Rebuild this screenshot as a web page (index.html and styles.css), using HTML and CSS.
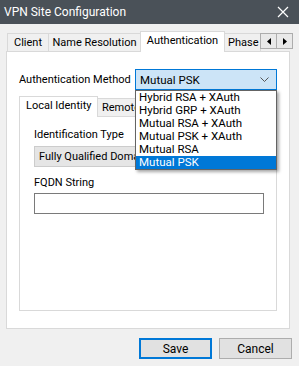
FILE: index.html
```html
<!DOCTYPE html>
<html>
<head>
<meta charset="utf-8">
<link rel="stylesheet" href="styles.css">
</head>
<body>
<div class="window">
  <div class="titlebar">
    <span class="title">VPN Site Configuration</span>
    <svg class="close" width="12" height="12" viewBox="0 0 12 12"><path d="M1 1L11 11M11 1L1 11" stroke="#fff" stroke-width="1.2"/></svg>
  </div>
  <div class="tabs">
    <div class="tab first">Client</div>
    <div class="tab name">Name Resolution</div>
    <div class="tab active">Authentication</div>
    <div class="tab phase">Phase</div>
    <div class="arrows">
      <div class="arrow"><svg width="4" height="7" viewBox="0 0 4 7"><path d="M4 0V7L0 3.5Z" fill="#000"/></svg></div>
      <div class="arrow"><svg width="4" height="7" viewBox="0 0 4 7"><path d="M0 0V7L4 3.5Z" fill="#000"/></svg></div>
    </div>
  </div>
  <div class="panel">
    <div class="method-row">
      <span class="label method-label">Authentication Method</span>
      <div class="combo-wrap">
        <div class="combo">
          <span>Mutual PSK</span>
          <svg width="9" height="6" viewBox="0 0 9 6"><path d="M0.5 0.5L4.5 4.5L8.5 0.5" stroke="#555" fill="none" stroke-width="1"/></svg>
        </div>
        <ul class="dropdown">
          <li>Hybrid RSA + XAuth</li>
          <li>Hybrid GRP + XAuth</li>
          <li>Mutual RSA + XAuth</li>
          <li>Mutual PSK + XAuth</li>
          <li>Mutual RSA</li>
          <li class="sel">Mutual PSK</li>
        </ul>
      </div>
    </div>
    <div class="subtabs">
      <div class="subtab active">Local Identity</div>
      <div class="subtab remote">Remote Identity</div>
    </div>
    <div class="subpanel">
      <div class="label">Identification Type</div>
      <div class="select">Fully Qualified Domain Name</div>
      <div class="label fqdn">FQDN String</div>
      <div class="input"></div>
    </div>
  </div>
  <div class="buttons">
    <button class="btn default">Save</button>
    <button class="btn">Cancel</button>
  </div>
</div>
</body>
</html>
```
FILE: styles.css
```css
* { box-sizing: border-box; }
html, body { margin: 0; padding: 0; }
body {
  width: 299px;
  height: 366px;
  background: #f0f0f0;
  font-family: Roboto, "Liberation Sans", sans-serif;
  font-size: 11px;
  color: #000;
  overflow: hidden;
}
.window { width: 299px; height: 366px; }
.titlebar {
  height: 24px;
  background: #4a5158;
  display: flex;
  align-items: center;
  justify-content: space-between;
  padding: 0 10px 0 4px;
  color: #fff;
  font-size: 12px;
}
.tabs {
  display: flex;
  align-items: flex-end;
  margin-top: 8px;
  padding-left: 7px;
  height: 19px;
  position: relative;
  z-index: 2;
}
.tab {
  height: 18px;
  border: 1px solid #d9d9d9;
  border-bottom: none;
  border-left: none;
  background: #f0f0f0;
  line-height: 17px;
  white-space: nowrap;
  text-align: center;
  overflow: hidden;
}
.tab.first { border-left: 1px solid #d9d9d9; width: 42px; }
.tab.name { width: 92px; }
.tab.active {
  width: 85px;
  background: #fff;
  border-left: 1px solid #d9d9d9;
  margin-left: -1px;
  margin-right: -1px;
  position: relative;
  z-index: 3;
  line-height: 18px;
  height: 21px;
  margin-bottom: -1px;
}
.tab.phase { width: 37px; text-align: left; padding-left: 4px; }
.arrows { display: flex; align-self: flex-start; margin-top: 1px; margin-left: -1px; }
.arrow {
  width: 17px;
  height: 16px;
  border: 1px solid #adadad;
  background: #e9e9e9;
  display: flex;
  align-items: center;
  justify-content: center;
  margin-right: -1px;
}
.panel {
  margin-left: 6px;
  width: 284px;
  height: 278px;
  background: #fff;
  border: 1px solid #d9d9d9;
  padding: 17px 12px 0 12px;
  position: relative;
  z-index: 1;
}
.method-row { display: flex; align-items: center; height: 21px; }
.method-label { width: 117px; white-space: nowrap; }
.combo-wrap { position: relative; }
.combo {
  width: 142px;
  height: 21px;
  background: #cce4f7;
  border: 1px solid #0078d7;
  display: flex;
  align-items: center;
  justify-content: space-between;
  padding: 0 7px 0 4px;
  font-size: 11.5px;
}
.dropdown {
  position: absolute;
  top: 21px;
  left: 0;
  width: 142px;
  margin: 0;
  padding: 0;
  list-style: none;
  background: #fff;
  border: 1px solid #646464;
  box-shadow: 2px 2px 3px rgba(0,0,0,0.35);
  z-index: 10;
  font-size: 11.5px;
}
.dropdown li { height: 13px; line-height: 13px; padding-left: 3px; white-space: nowrap; }
.dropdown li.sel { background: #0078d7; color: #fff; }
.subtabs { display: flex; align-items: flex-end; margin-top: 5px; height: 21px; position: relative; z-index: 2; }
.subtab {
  height: 18px;
  border: 1px solid #d9d9d9;
  border-bottom: none;
  background: #f0f0f0;
  padding: 0 4px;
  line-height: 17px;
  white-space: nowrap;
}
.subtab.remote { width: 44px; overflow: hidden; }
.subtab.active {
  height: 21px;
  background: #fff;
  padding: 0 6px;
  margin-bottom: -1px;
  line-height: 18px;
  border-right: 1px solid #d9d9d9;
  width: 79px;
}
.subtab + .subtab { border-left: none; }
.subpanel {
  width: 258px;
  height: 195px;
  border: 1px solid #d9d9d9;
  background: #fff;
  padding: 10px 0 0 14px;
}
.label { line-height: 16px; }
.select {
  margin-top: 3px;
  width: 229px;
  height: 21px;
  background: #e5e5e5;
  border: 1px solid #cccccc;
  padding: 0 4px;
  line-height: 19px;
  white-space: nowrap;
  overflow: hidden;
}
.fqdn { margin-top: 8px; }
.input {
  margin-top: 2px;
  width: 230px;
  height: 21px;
  border: 1px solid #7a7a7a;
  background: #fff;
}
.buttons { display: flex; justify-content: flex-end; gap: 7px; padding: 9px 7px 0 0; }
.btn {
  width: 73px;
  height: 21px;
  background: #e1e1e1;
  border: 1px solid #adadad;
  font-family: inherit;
  font-size: 12px;
  padding: 0;
  color: #000;
}
.btn.default { border: 2px solid #0078d7; }
```
